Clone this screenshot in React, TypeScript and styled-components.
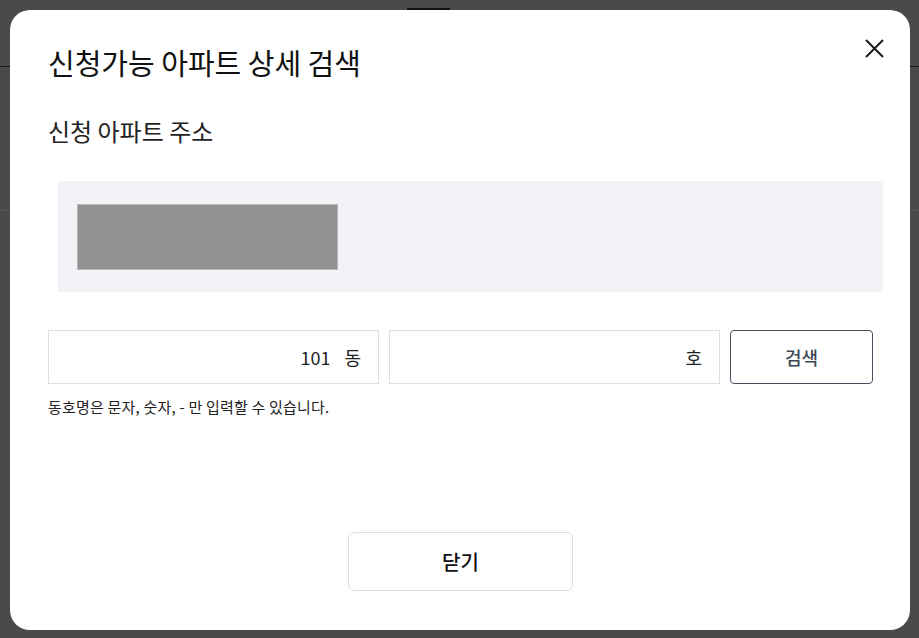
import styled, { createGlobalStyle } from "styled-components";

const GlobalStyle = createGlobalStyle`
  html, body {
    margin: 0;
    padding: 0;
    width: 919px;
    height: 638px;
    overflow: hidden;
    background: #4a4a4a;
    font-family: "Noto Sans CJK KR", "Noto Sans", sans-serif;
  }
  * {
    box-sizing: border-box;
  }
`;

// page behind the dimmed overlay
const Page = styled.div`
  width: 919px;
  height: 638px;
  display: flex;
  flex-direction: column;
`;

const PageHeader = styled.header`
  height: 67px;
  border-bottom: 1px solid #1c1c1c;
  display: flex;
  justify-content: flex-start;
  padding-left: 407px;
`;

const ActiveTab = styled.div`
  width: 43px;
  height: 10px;
  border-bottom: 2px solid #111;
`;

const PageSection = styled.section`
  height: 144px;
  border-bottom: 1px solid #5a5a5a;
`;

const Overlay = styled.div`
  position: fixed;
  inset: 0;
  display: flex;
  align-items: flex-start;
  justify-content: flex-start;
  padding: 10px 0 0 10px;
`;

const Modal = styled.div`
  position: relative;
  width: 900px;
  height: 620px;
  background: #fff;
  border-radius: 20px;
  display: flex;
  flex-direction: column;
  padding: 34px 37px 39px 38px;
`;

const Title = styled.h2`
  margin: 0;
  font-size: 29px;
  line-height: 36px;
  font-weight: 400;
  color: #111;
`;

const CloseIcon = styled.button`
  position: absolute;
  top: 29px;
  right: 26px;
  width: 19px;
  height: 19px;
  padding: 0;
  border: none;
  background: transparent;
  cursor: pointer;
  svg {
    display: block;
  }
`;

const SubTitle = styled.h3`
  margin: 36px 0 0;
  font-size: 24px;
  line-height: 30px;
  font-weight: 400;
  color: #222;
`;

const AddressBox = styled.div`
  margin: 35px -10px 0 10px;
  height: 111px;
  background: #f2f3f6;
  border-radius: 2px;
  display: flex;
  align-items: center;
  padding: 0 19px;
`;

const Masked = styled.div`
  width: 261px;
  height: 66px;
  background: #929292;
  border: 1px solid #b9b9b9;
`;

const SearchRow = styled.div`
  margin-top: 38px;
  display: flex;
  gap: 10px;
`;

const Field = styled.label`
  width: 331px;
  height: 54px;
  border: 1px solid #dedede;
  display: flex;
  align-items: center;
  justify-content: flex-end;
  padding: 0 17px 0 12px;
  gap: 14px;
  font-size: 18px;
  color: #222;
`;

const FieldInput = styled.input`
  flex: 1;
  min-width: 0;
  border: none;
  outline: none;
  text-align: right;
  font-family: inherit;
  font-size: 18px;
  color: #222;
  padding: 0;
  background: transparent;
`;

const Suffix = styled.span`
  line-height: 1;
`;

const SearchButton = styled.button`
  width: 143px;
  height: 54px;
  border: 1px solid #46505e;
  border-radius: 4px;
  background: #fff;
  font-family: inherit;
  font-size: 18px;
  font-weight: 500;
  color: #3c4654;
  cursor: pointer;
`;

const Hint = styled.p`
  margin: 14px 0 0;
  font-size: 15px;
  line-height: 18px;
  letter-spacing: 0.2px;
  color: #222;
`;

const Footer = styled.div`
  margin-top: auto;
  display: flex;
  justify-content: center;
`;

const CloseButton = styled.button`
  width: 225px;
  height: 59px;
  border: 1px solid #dedede;
  border-radius: 6px;
  background: #fff;
  font-family: inherit;
  font-size: 20px;
  font-weight: 500;
  color: #111;
  cursor: pointer;
`;

const App = () => {
  return (
    <>
      <GlobalStyle />
      <Page>
        <PageHeader>
          <ActiveTab />
        </PageHeader>
        <PageSection />
      </Page>
      <Overlay>
        <Modal>
          <Title>신청가능 아파트 상세 검색</Title>
          <CloseIcon aria-label="닫기">
            <svg width="19" height="19" viewBox="0 0 19 19">
              <path
                d="M1 1 L18 18 M18 1 L1 18"
                stroke="#1a1a1a"
                strokeWidth="2"
                fill="none"
              />
            </svg>
          </CloseIcon>
          <SubTitle>신청 아파트 주소</SubTitle>
          <AddressBox>
            <Masked />
          </AddressBox>
          <SearchRow>
            <Field>
              <FieldInput defaultValue="101" />
              <Suffix>동</Suffix>
            </Field>
            <Field>
              <FieldInput />
              <Suffix>호</Suffix>
            </Field>
            <SearchButton>검색</SearchButton>
          </SearchRow>
          <Hint>동호명은 문자, 숫자, - 만 입력할 수 있습니다.</Hint>
          <Footer>
            <CloseButton>닫기</CloseButton>
          </Footer>
        </Modal>
      </Overlay>
    </>
  );
};

export default App;
